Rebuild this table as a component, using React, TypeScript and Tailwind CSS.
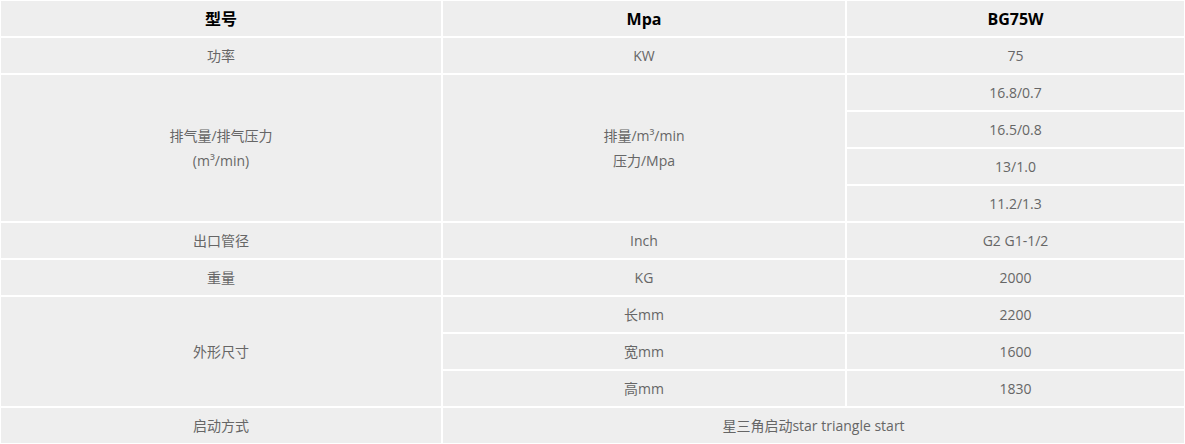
import React from 'react';

const font = { fontFamily: '"Open Sans", "Noto Sans CJK SC", sans-serif' };

const cell = 'border border-white bg-[#eeeeee] text-center align-middle h-[37px] p-0';
const head = `${cell} text-[16px] font-bold text-black`;

const App: React.FC = () => {
  return (
    <div className="w-[1185px] bg-white" style={font}>
      <table className="w-[1185px] border-separate border-spacing-0 table-fixed text-[14px] text-[#666666]">
        <colgroup>
          <col className="w-[442px]" />
          <col className="w-[404px]" />
          <col className="w-[339px]" />
        </colgroup>
        <tbody>
          {/* Header */}
          <tr>
            <td className={head}>型号</td>
            <td className={head}>Mpa</td>
            <td className={head}>BG75W</td>
          </tr>
          <tr>
            <td className={cell}>功率</td>
            <td className={cell}>KW</td>
            <td className={cell}>75</td>
          </tr>
          <tr>
            <td rowSpan={4} className={`${cell} leading-[25px]`}>
              排气量/排气压力
              <br />
              (m³/min)
            </td>
            <td rowSpan={4} className={`${cell} leading-[25px]`}>
              排量/m³/min
              <br />
              压力/Mpa
            </td>
            <td className={cell}>16.8/0.7</td>
          </tr>
          <tr>
            <td className={cell}>16.5/0.8</td>
          </tr>
          <tr>
            <td className={cell}>13/1.0</td>
          </tr>
          <tr>
            <td className={cell}>11.2/1.3</td>
          </tr>
          <tr>
            <td className={cell}>出口管径</td>
            <td className={cell}>Inch</td>
            <td className={cell}>G2 G1-1/2</td>
          </tr>
          <tr>
            <td className={cell}>重量</td>
            <td className={cell}>KG</td>
            <td className={cell}>2000</td>
          </tr>
          <tr>
            <td rowSpan={3} className={cell}>外形尺寸</td>
            <td className={cell}>长mm</td>
            <td className={cell}>2200</td>
          </tr>
          <tr>
            <td className={cell}>宽mm</td>
            <td className={cell}>1600</td>
          </tr>
          <tr>
            <td className={cell}>高mm</td>
            <td className={cell}>1830</td>
          </tr>
          <tr>
            <td className={cell}>启动方式</td>
            <td colSpan={2} className={cell}>星三角启动star triangle start</td>
          </tr>
        </tbody>
      </table>
    </div>
  );
};

export default App;
